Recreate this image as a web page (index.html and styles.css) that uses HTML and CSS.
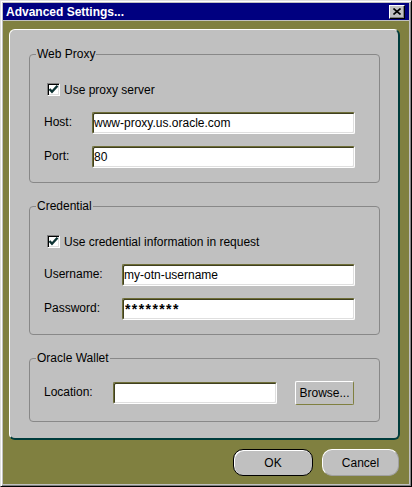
FILE: index.html
```html
<!DOCTYPE html>
<html lang="en">
    <head>
        <meta charset="UTF-8" />
        <meta name="viewport" content="width=device-width, initial-scale=1.0" />
        <title>Advanced Settings</title>
        <link rel="stylesheet" href="styles.css">
    </head>
    <body>
        <div class="window">
            <div class="titlebar">
                <span class="title">Advanced Settings...</span>
                <button type="button" class="close" aria-label="Close">
                    <svg width="8" height="7" viewBox="0 0 8 7">
                        <path d="M0.5 0.5 L7.5 6.5 M7.5 0.5 L0.5 6.5" stroke="#000" stroke-width="1.6" fill="none" />
                    </svg>
                </button>
            </div>

            <div class="client">
                <div class="panel">
                    <fieldset class="group proxy">
                        <legend>Web Proxy</legend>
                        <label class="check">
                            <span class="box">
                                <svg width="11" height="11" viewBox="0 0 11 11">
                                    <path d="M1.5 5 L4 7.8 L9.5 1.8" stroke="#0d3333" stroke-width="2.4" fill="none" />
                                </svg>
                            </span>
                            Use proxy server
                        </label>
                        <div class="row">
                            <span class="label">Host:</span>
                            <input type="text" class="field" value="www-proxy.us.oracle.com" />
                        </div>
                        <div class="row">
                            <span class="label">Port:</span>
                            <input type="text" class="field" value="80" />
                        </div>
                    </fieldset>

                    <fieldset class="group credential">
                        <legend>Credential</legend>
                        <label class="check">
                            <span class="box">
                                <svg width="11" height="11" viewBox="0 0 11 11">
                                    <path d="M1.5 5 L4 7.8 L9.5 1.8" stroke="#0d3333" stroke-width="2.4" fill="none" />
                                </svg>
                            </span>
                            Use credential information in request
                        </label>
                        <div class="row">
                            <span class="label">Username:</span>
                            <input type="text" class="field" value="my-otn-username" />
                        </div>
                        <div class="row">
                            <span class="label">Password:</span>
                            <input type="text" class="field secret" value="********" />
                        </div>
                    </fieldset>

                    <fieldset class="group wallet">
                        <legend>Oracle Wallet</legend>
                        <div class="row">
                            <span class="label">Location:</span>
                            <input type="text" class="field" value="" />
                            <button type="button" class="browse">Browse...</button>
                        </div>
                    </fieldset>
                </div>

                <div class="actions">
                    <button type="button" class="btn default">OK</button>
                    <button type="button" class="btn">Cancel</button>
                </div>
            </div>
        </div>
    </body>
</html>
```

FILE: styles.css
```css
body {
    margin: 0;
    font-family: "Liberation Sans", Arial, sans-serif;
    font-size: 12px;
    color: #000;
}

button,
input {
    font-family: inherit;
    font-size: 12px;
    color: #000;
}

.window {
    width: 412px;
    height: 487px;
    box-sizing: border-box;
    display: flex;
    flex-direction: column;
    padding: 2px;
    border: 1px solid;
    border-color: #dfdfdf #000 #000 #dfdfdf;
    box-shadow: inset 1px 1px #fff, inset -1px -1px #808080;
    background-color: #c0c0c0;
}

.titlebar {
    height: 17px;
    margin-bottom: 1px;
    padding: 0 4px 0 3px;
    display: flex;
    align-items: center;
    justify-content: space-between;
    background-color: #000080;
    color: #fff;
}

.title {
    font-weight: bold;
    line-height: 14px;
}

.close {
    width: 16px;
    height: 14px;
    padding: 0;
    display: flex;
    align-items: center;
    justify-content: center;
    border: 1px solid;
    border-color: #fff #000 #000 #fff;
    box-shadow: inset -1px -1px #808080;
    background-color: #c0c0c0;
}

.client {
    flex: 1;
    display: flex;
    flex-direction: column;
    padding: 8px 9px 0 6px;
    background-color: #808040;
}

.panel {
    height: 411px;
    box-sizing: border-box;
    padding: 17px 18px 0 19px;
    border-style: solid;
    border-width: 1px 2px 2px 1px;
    border-color: #fff #003c3c #003c3c #fff;
    border-radius: 6px;
    background-color: #c0c0c0;
}

.group {
    margin: 0 0 16px;
    padding: 0 24px 14px 14px;
    min-width: 0;
    border: 1px solid #888;
    border-radius: 4px;
}

.group legend {
    margin-left: -8px;
    padding: 0 1px;
    line-height: 14px;
}

.wallet {
    padding-bottom: 16px;
}

.check {
    height: 13px;
    margin: 22px 0 0 3px;
    display: flex;
    align-items: center;
    gap: 4px;
    line-height: 14px;
}

.box {
    width: 13px;
    height: 13px;
    box-sizing: border-box;
    display: flex;
    align-items: center;
    justify-content: center;
    border: 1px solid;
    border-color: #808080 #fff #fff #808080;
    box-shadow: inset 1px 1px #000, inset -1px -1px #dfdfdf;
    background-color: #fff;
}

.row {
    height: 22px;
    margin-top: 12px;
    display: flex;
    align-items: center;
}

.check + .row {
    margin-top: 16px;
}

.wallet .row {
    height: 24px;
    margin-top: 16px;
}

.label {
    flex: none;
    padding-bottom: 3px;
}

.proxy .label {
    width: 48px;
}

.credential .label {
    width: 78px;
}

.wallet .label {
    width: 69px;
}

.field {
    flex: 1;
    min-width: 0;
    height: 22px;
    box-sizing: border-box;
    margin: 0;
    padding: 0 1px;
    border: 1px solid;
    border-color: #6e6e38 #fff #fff #6e6e38;
    border-radius: 2px;
    box-shadow: inset 1px 1px #404020, inset -1px -1px #dfdfdf;
    background-color: #fff;
    outline: none;
}

.secret {
    padding-left: 2px;
    font-size: 14px;
    font-weight: bold;
    letter-spacing: 1.4px;
}

.wallet .field {
    flex: none;
    width: 164px;
}

.browse {
    width: 59px;
    height: 24px;
    margin-left: 18px;
    padding: 0;
    border: 1px solid;
    border-color: #fff #808040 #808040 #fff;
    border-radius: 2px;
    background-color: #c0c0c0;
}

.actions {
    margin: 9px 1px 0 0;
    display: flex;
    justify-content: flex-end;
    gap: 9px;
}

.btn {
    width: 77px;
    height: 27px;
    padding: 0;
    border: 1px solid;
    border-color: #fff #a0a0a0 #a0a0a0 #fff;
    border-radius: 10px;
    background-color: #c0c0c0;
}

.btn.default {
    width: 80px;
    border-color: #000;
    box-shadow: inset 1px 1px #fff;
}
```
